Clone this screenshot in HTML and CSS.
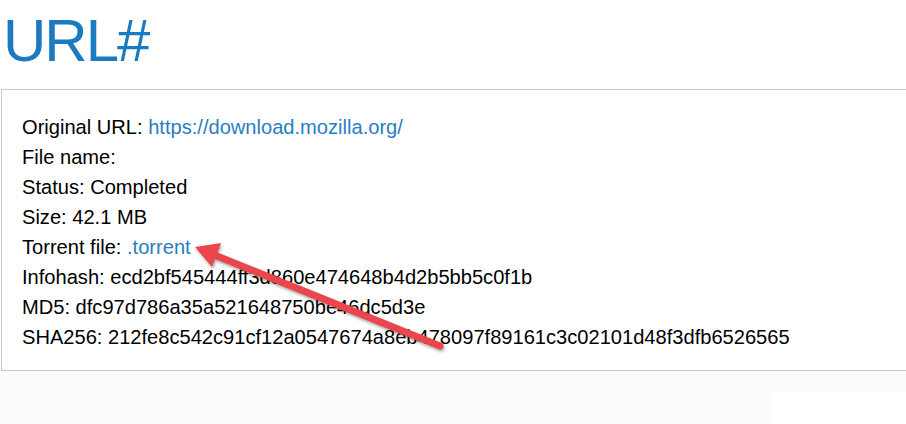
FILE: index.html
```html
<!DOCTYPE html>
<html>
<head>
<meta charset="utf-8">
<link rel="stylesheet" href="styles.css">
</head>
<body>
<h1 class="title">URL#</h1>
<div class="panel">
  <div class="row">Original URL: <a class="link" href="#">https://download.mozilla.org/</a></div>
  <div class="row">File name:</div>
  <div class="row">Status: Completed</div>
  <div class="row">Size: 42.1 MB</div>
  <div class="row">Torrent file: <a class="link" href="#">.torrent</a></div>
  <div class="row">Infohash: ecd2bf545444ff3d860e474648b4d2b5bb5c0f1b</div>
  <div class="row">MD5: dfc97d786a35a521648750be46dc5d3e</div>
  <div class="row">SHA256: 212fe8c542c91cf12a0547674a8eb478097f89161c3c02101d48f3dfb6526565</div>
</div>
<div class="footer"><div class="footer-blank"></div></div>
<svg class="annotation" width="906" height="424" viewBox="0 0 906 424">
  <g class="arrow">
    <line x1="440" y1="346" x2="212" y2="254" stroke="#ea464b" stroke-width="7" stroke-linecap="round"/>
    <polygon points="195,247 221,243 212,267" fill="#ea464b"/>
  </g>
</svg>
</body>
</html>
```
FILE: styles.css
```css
html, body {
  margin: 0;
  padding: 0;
  background: #fff;
}
body {
  position: relative;
  width: 906px;
  height: 424px;
  overflow: hidden;
  font-family: "Liberation Sans", Arial, Helvetica, sans-serif;
  color: #000;
}
.title {
  margin: 11px 0 18px 3px;
  font-size: 60px;
  line-height: 60px;
  letter-spacing: -2px;
  font-weight: normal;
  color: #1c7bc0;
}
.panel {
  margin-left: 1px;
  border: 1px solid #c8c8c8;
  border-right: none;
  padding: 22px 0 18px 20px;
  font-size: 20.1px;
}
.row {
  line-height: 30px;
  height: 30px;
  white-space: nowrap;
}
.link {
  color: #2a7ebf;
  text-decoration: none;
}
.footer {
  height: 60px;
  background: #fbfbfb;
  padding-top: 21px;
  box-sizing: border-box;
}
.footer-blank {
  margin-left: 772px;
  height: 40px;
  background: #fff;
}
.annotation {
  position: absolute;
  left: 0;
  top: 0;
  pointer-events: none;
}
.arrow {
  filter: drop-shadow(1px 2px 1.5px rgba(0,0,0,0.35));
}
```
